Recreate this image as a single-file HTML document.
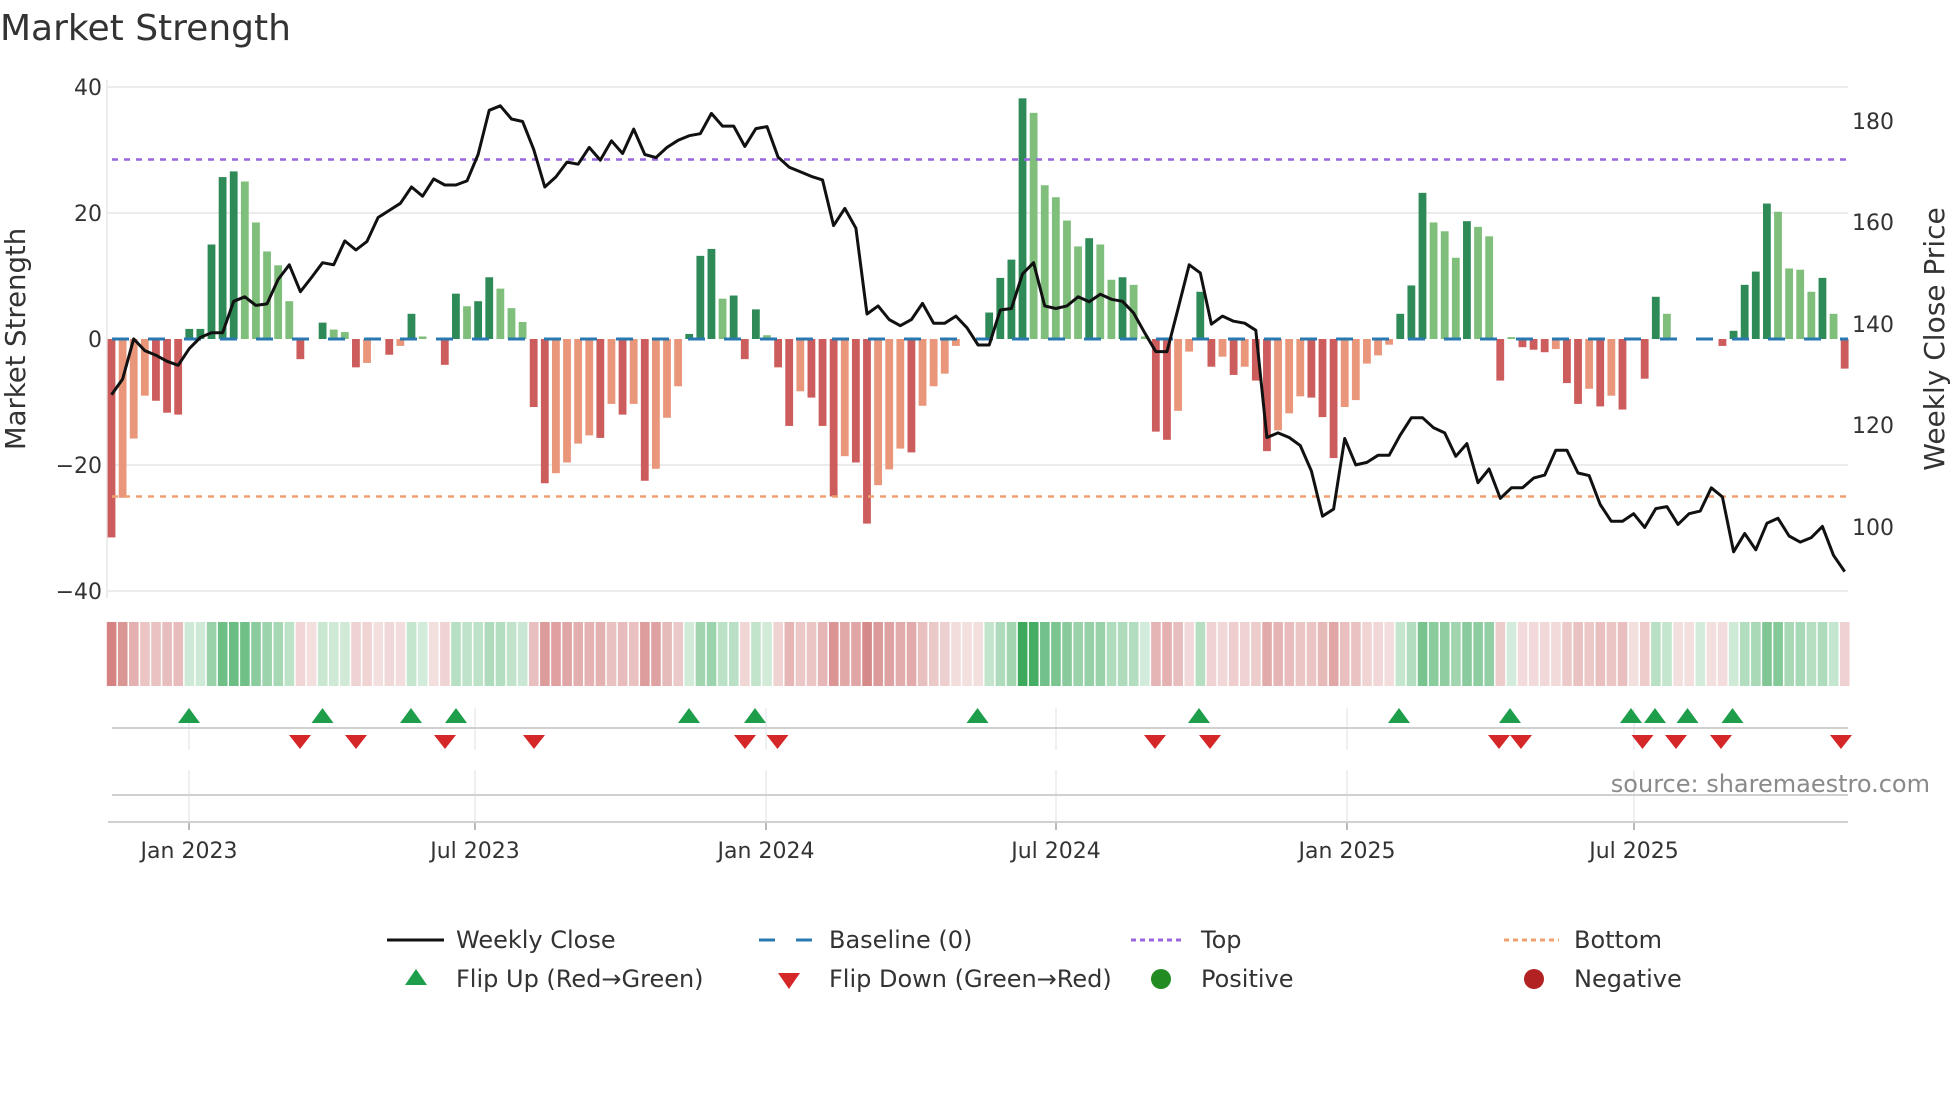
<!DOCTYPE html>
<html><head><meta charset="utf-8">
<style>
html,body{margin:0;padding:0;background:#fff;}
svg{display:block;font-family:"DejaVu Sans","Liberation Sans",sans-serif;}
</style></head>
<body>
<svg id="c" width="1960" height="1102" viewBox="0 0 1960 1102" xmlns="http://www.w3.org/2000/svg">
<rect width="1960" height="1102" fill="#fff"/>
<text x="0" y="40" font-size="36" fill="#333">Market Strength</text>
<g id="grid"></g>
<g id="bars"></g>
<g id="heat"></g>
<g id="marks"></g>
<g font-size="22" fill="#333" text-anchor="end">
<text x="102" y="95">40</text>
<text x="102" y="221">20</text>
<text x="102" y="347">0</text>
<text x="102" y="473">−20</text>
<text x="102" y="599">−40</text>
</g>
<g font-size="22" fill="#333" text-anchor="start">
<text x="1852" y="129">180</text>
<text x="1852" y="230">160</text>
<text x="1852" y="332">140</text>
<text x="1852" y="433">120</text>
<text x="1852" y="535">100</text>
</g>
<text transform="translate(25,339) rotate(-90)" font-size="27.5" fill="#333" text-anchor="middle">Market Strength</text>
<text transform="translate(1944,339) rotate(-90)" font-size="28" fill="#333" text-anchor="middle">Weekly Close Price</text>
<g font-size="22" fill="#333" text-anchor="middle">
<text x="189" y="858">Jan 2023</text>
<text x="475" y="858">Jul 2023</text>
<text x="766" y="858">Jan 2024</text>
<text x="1056" y="858">Jul 2024</text>
<text x="1347" y="858">Jan 2025</text>
<text x="1634" y="858">Jul 2025</text>
</g>
<text x="1930" y="792" font-size="24" fill="#8a8a8a" text-anchor="end">source: sharemaestro.com</text>
<g font-size="24" fill="#333">
<line x1="387" y1="940" x2="444" y2="940" stroke="#111" stroke-width="3"/>
<text x="456" y="948">Weekly Close</text>
<line x1="759" y1="940" x2="812" y2="940" stroke="#2a78b0" stroke-width="3" stroke-dasharray="16,21"/>
<text x="829" y="948">Baseline (0)</text>
<line x1="1131" y1="940" x2="1185" y2="940" stroke="#9966dd" stroke-width="3" stroke-dasharray="5,4"/>
<text x="1201" y="948">Top</text>
<line x1="1504" y1="940" x2="1559" y2="940" stroke="#f0a070" stroke-width="3" stroke-dasharray="5,4"/>
<text x="1574" y="948">Bottom</text>
<polygon points="416,969 405,985 427,985" fill="#1e9e4a"/>
<text x="456" y="987">Flip Up (Red→Green)</text>
<polygon points="778,973 800,973 789,989" fill="#d62728"/>
<text x="829" y="987">Flip Down (Green→Red)</text>
<circle cx="1161" cy="979" r="10" fill="#228b22"/>
<text x="1201" y="987">Positive</text>
<circle cx="1534" cy="979" r="10" fill="#b22222"/>
<text x="1574" y="987">Negative</text>
</g>
</svg>
<script>
(function(){
var NS="http://www.w3.org/2000/svg";
function el(p,t,a){var e=document.createElementNS(NS,t);for(var k in a)e.setAttribute(k,a[k]);p.appendChild(e);return e;}
var V=[-31.5,-25.2,-15.8,-9,-9.8,-11.7,-12,1.6,1.6,15,25.7,26.6,25,18.5,13.9,11.7,6,-3.2,0,2.6,1.5,1.1,-4.5,-3.8,0,-2.5,-1.1,4,0.4,0,-4.1,7.2,5.2,6,9.8,8,4.9,2.7,-10.8,-22.9,-21.3,-19.6,-16.6,-15.3,-15.7,-10.3,-12,-10.3,-22.5,-20.6,-12.5,-7.5,0.8,13.2,14.3,6.4,6.9,-3.2,4.7,0.6,-4.5,-13.8,-8.3,-9.3,-13.8,-25,-18.6,-19.6,-29.3,-23.2,-20.7,-17.4,-18,-10.6,-7.5,-5.5,-1.1,0,0,4.2,9.7,12.6,38.2,35.9,24.4,22.5,18.8,14.7,16,15,9.4,9.8,8.6,0.4,-14.7,-16,-11.4,-2,7.5,-4.4,-2.8,-5.7,-4.4,-6.6,-17.8,-14.5,-11.8,-9.1,-9.3,-12.4,-18.9,-10.8,-9.7,-3.9,-2.6,-0.9,4,8.5,23.2,18.5,17.1,12.9,18.7,17.8,16.3,-6.6,0.3,-1.3,-1.7,-2.1,-1.6,-7,-10.3,-7.9,-10.7,-9,-11.2,0,-6.3,6.7,4,0,0,0.2,0,-1.1,1.3,8.6,10.7,21.5,20.2,11.2,11,7.5,9.7,4,-4.7];
var F="dllldddddd"+"ddllllldld"+"lldlldldll"+"ddlddllldd"+"lllldldldl"+"lldddldddl"+"ddldddlddl"+"lldlllllld"+"dddllllldl"+"ldllddlldd"+"ldlddllldd"+"dllllldddl"+"lldlldlddd"+"lddldldldd"+"llldlddddd"+"lllldld";
var P=[126.1,129.2,137.1,134.8,133.9,132.7,131.9,135.2,137.4,138.3,138.3,144.5,145.4,143.7,144,148.8,151.7,146.4,149.2,152.1,151.7,156.4,154.6,156.3,161,162.4,163.8,167,165.2,168.6,167.4,167.4,168.2,173.4,182.1,183,180.4,179.9,174.4,167,169,171.9,171.5,174.8,172.3,176.1,173.6,178.4,173.4,172.8,174.8,176.2,177.1,177.5,181.5,179,179,175,178.5,178.9,172.9,170.9,170,169.1,168.4,159.4,162.8,158.9,142,143.6,140.9,139.7,140.9,144.1,140.2,140.2,141.6,139.3,135.9,135.9,142.8,143.1,149.9,152.1,143.6,143.1,143.6,145.4,144.4,145.9,144.9,144.5,142.2,138.3,134.6,134.6,143.1,151.7,150.1,140,141.6,140.6,140.2,138.8,117.7,118.6,117.7,116.1,111.1,102.2,103.6,117.5,112.3,112.8,114.2,114.2,118.2,121.6,121.6,119.6,118.6,114,116.5,108.8,111.5,105.7,107.8,107.8,109.7,110.3,115.2,115.2,110.7,110.2,104.5,101.2,101.2,102.7,100,103.7,104.1,100.6,102.7,103.2,107.8,106,95.2,98.8,95.6,100.8,101.8,98.3,97.1,98,100.2,94.5,91.3];
function X(i){return 111.5+i*11.11;}
function Y(v){return 339-v*6.3;}
function PY(p){return 121+(180-p)*5.08;}
var g=document.getElementById('grid');
[40,20,-20,-40].forEach(function(v){el(g,'line',{x1:108,x2:1848,y1:Y(v),y2:Y(v),stroke:'#ececec','stroke-width':2});});
el(g,'line',{x1:107,x2:107,y1:80,y2:598,stroke:'#ececec','stroke-width':2});
var ticks=[189,475,766,1056,1347,1634];
ticks.forEach(function(x){
 el(g,'line',{x1:x,x2:x,y1:708,y2:750,stroke:'#eef0f4','stroke-width':2});
 el(g,'line',{x1:x,x2:x,y1:770,y2:822,stroke:'#eef0f4','stroke-width':2});
 el(g,'line',{x1:x,x2:x,y1:822,y2:830,stroke:'#bbb','stroke-width':2});
});
el(g,'line',{x1:112,x2:1848,y1:728,y2:728,stroke:'#d0d0d0','stroke-width':2});
el(g,'line',{x1:112,x2:1848,y1:795,y2:795,stroke:'#d0d0d0','stroke-width':2});
el(g,'line',{x1:108,x2:1848,y1:822,y2:822,stroke:'#d0d0d0','stroke-width':2});
var b=document.getElementById('bars');
for(var i=0;i<V.length;i++){
 var v=V[i];if(v===0)continue;
 var d=F[i]==='d';
 var col=v>0?(d?'#2e8b57':'#7fbf7b'):(d?'#cd5c5c':'#e9967a');
 var y1=Y(Math.max(v,0)),y2=Y(Math.min(v,0));
 el(b,'rect',{x:X(i)-3.9,y:y1,width:7.8,height:Math.max(1,y2-y1),fill:col});
}
el(b,'line',{x1:112,x2:1848,y1:339,y2:339,stroke:'#2a78b0','stroke-width':3,'stroke-dasharray':'17,19'});
el(b,'line',{x1:112,x2:1848,y1:Y(28.5),y2:Y(28.5),stroke:'#9966dd','stroke-width':2.5,'stroke-dasharray':'6,6'});
el(b,'line',{x1:112,x2:1848,y1:Y(-25),y2:Y(-25),stroke:'#f0a070','stroke-width':2.5,'stroke-dasharray':'6,6'});
var pts=P.map(function(p,i){return X(i).toFixed(1)+','+PY(p).toFixed(1);}).join(' ');
el(b,'polyline',{points:pts,fill:'none',stroke:'#111','stroke-width':3,'stroke-linejoin':'round'});
var h=document.getElementById('heat');
function mix(c,t){return 'rgb('+c.map(function(x){return Math.round(255+(x-255)*t);}).join(',')+')';}
for(var i=0;i<V.length;i++){
 var v=V[i];var t=Math.min(1,0.2+0.7*Math.abs(v)/38);
 var col=v>0?mix([40,160,75],t):mix([200,95,95],t);
 el(h,'rect',{x:X(i)-4.7,y:622,width:9.6,height:64,fill:col});
}
var m=document.getElementById('marks');
[189,322.5,411,456,689,755,977.5,1199,1399,1510,1631,1655,1687.5,1732.5].forEach(function(x){
 el(m,'polygon',{points:x+',708 '+(x-11)+',723 '+(x+11)+',723',fill:'#1e9e4a'});});
[300,356,445,534,745,777.5,1155,1210,1499,1521,1642.5,1676,1721,1841].forEach(function(x){
 el(m,'polygon',{points:(x-11)+',735 '+(x+11)+',735 '+x+',749',fill:'#d62728'});});
})();
</script>
</body></html>
